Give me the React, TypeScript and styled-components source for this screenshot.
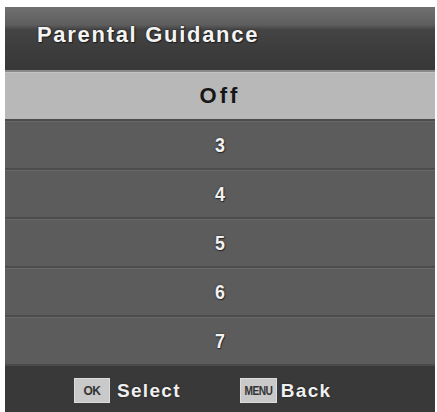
import React from "react";
import styled, { createGlobalStyle } from "styled-components";

const Global = createGlobalStyle`
  html, body {
    margin: 0;
    padding: 0;
    background: #ffffff;
  }
  body {
    font-family: "Liberation Sans", Arial, sans-serif;
  }
`;

const Panel = styled.div`
  margin: 7px 2px 0 5px;
  width: 430px;
  height: 405px;
  display: flex;
  flex-direction: column;
  background: #3a3a3a;
  overflow: hidden;
`;

const Header = styled.div`
  height: 63px;
  flex: none;
  box-sizing: border-box;
  padding: 15px 0 0 32px;
  background: linear-gradient(
    to bottom,
    #707070 0%,
    #5e5e5e 28%,
    #444444 36%,
    #3c3c3c 70%,
    #383838 100%
  );
`;

const Title = styled.h1`
  margin: 0;
  font-family: "Liberation Sans", Arial, sans-serif;
  font-weight: 700;
  font-size: 22px;
  letter-spacing: 1.7px;
  color: #f4f4f4;
  text-shadow: 0 0 2px #1a1a1a, 1px 1px 1px #222;
`;

const List = styled.div`
  display: flex;
  flex-direction: column;
`;

const Row = styled.div<{ $active?: boolean }>`
  height: 49px;
  box-sizing: border-box;
  padding-top: 3px;
  display: flex;
  align-items: center;
  justify-content: center;
  background: ${(p) => (p.$active ? "#b8b8b8" : "#5c5c5c")};
  box-shadow: inset 0 2px 0 ${(p) => (p.$active ? "#8a8a8a" : "#4c4c4c")},
    inset 0 3px 0 ${(p) => (p.$active ? "#c4c4c4" : "#686868")};
  font-family: "Liberation Sans", Arial, sans-serif;
  font-weight: 700;
  font-size: ${(p) => (p.$active ? "22px" : "21px")};
  letter-spacing: ${(p) => (p.$active ? "3px" : "0")};
  color: ${(p) => (p.$active ? "#161616" : "#f2f2f2")};
  text-shadow: ${(p) =>
    p.$active ? "none" : "0 0 2px #222, 1px 1px 1px #2a2a2a"};
`;

/* digits on the rating rows are drawn in a narrow face */
const Narrow = styled.span`
  display: inline-block;
  transform: scaleX(0.85);
`;

const Footer = styled.div`
  flex: 1;
  display: flex;
  align-items: center;
  box-sizing: border-box;
  padding: 5px 0 0 69px;
  background: #393939;
  box-shadow: inset 0 2px 0 #4a4a4a;
`;

const Hint = styled.div<{ $gap?: number }>`
  display: flex;
  align-items: center;
  gap: ${(p) => p.$gap ?? 7}px;
  margin-right: 59px;
`;

const Key = styled.span<{ $w: number }>`
  width: ${(p) => p.$w}px;
  height: 25px;
  box-sizing: border-box;
  display: flex;
  align-items: center;
  justify-content: center;
  background: #c9c9c9;
  border: 1px solid #dcdcdc;
  color: #333333;
  font-family: "Liberation Sans", Arial, sans-serif;
  font-weight: 700;
  font-size: 12px;
  letter-spacing: -0.6px;
`;

const HintText = styled.span`
  font-family: "Liberation Sans", Arial, sans-serif;
  font-weight: 700;
  font-size: 19px;
  letter-spacing: 1.3px;
  color: #f0f0f0;
  text-shadow: 0 0 2px #1a1a1a;
`;

const options = ["Off", "3", "4", "5", "6", "7"];

export default function App() {
  return (
    <>
      <Global />
      <Panel>
        <Header>
          <Title>Parental Guidance</Title>
        </Header>
        <List>
          {options.map((o, i) => (
            <Row key={o} $active={i === 0}>
              {i === 0 ? o : <Narrow>{o}</Narrow>}
            </Row>
          ))}
        </List>
        <Footer>
          <Hint>
            <Key $w={36}>OK</Key>
            <HintText>Select</HintText>
          </Hint>
          <Hint $gap={4}>
            <Key $w={37}>
              <Narrow>MENU</Narrow>
            </Key>
            <HintText>Back</HintText>
          </Hint>
        </Footer>
      </Panel>
    </>
  );
}
